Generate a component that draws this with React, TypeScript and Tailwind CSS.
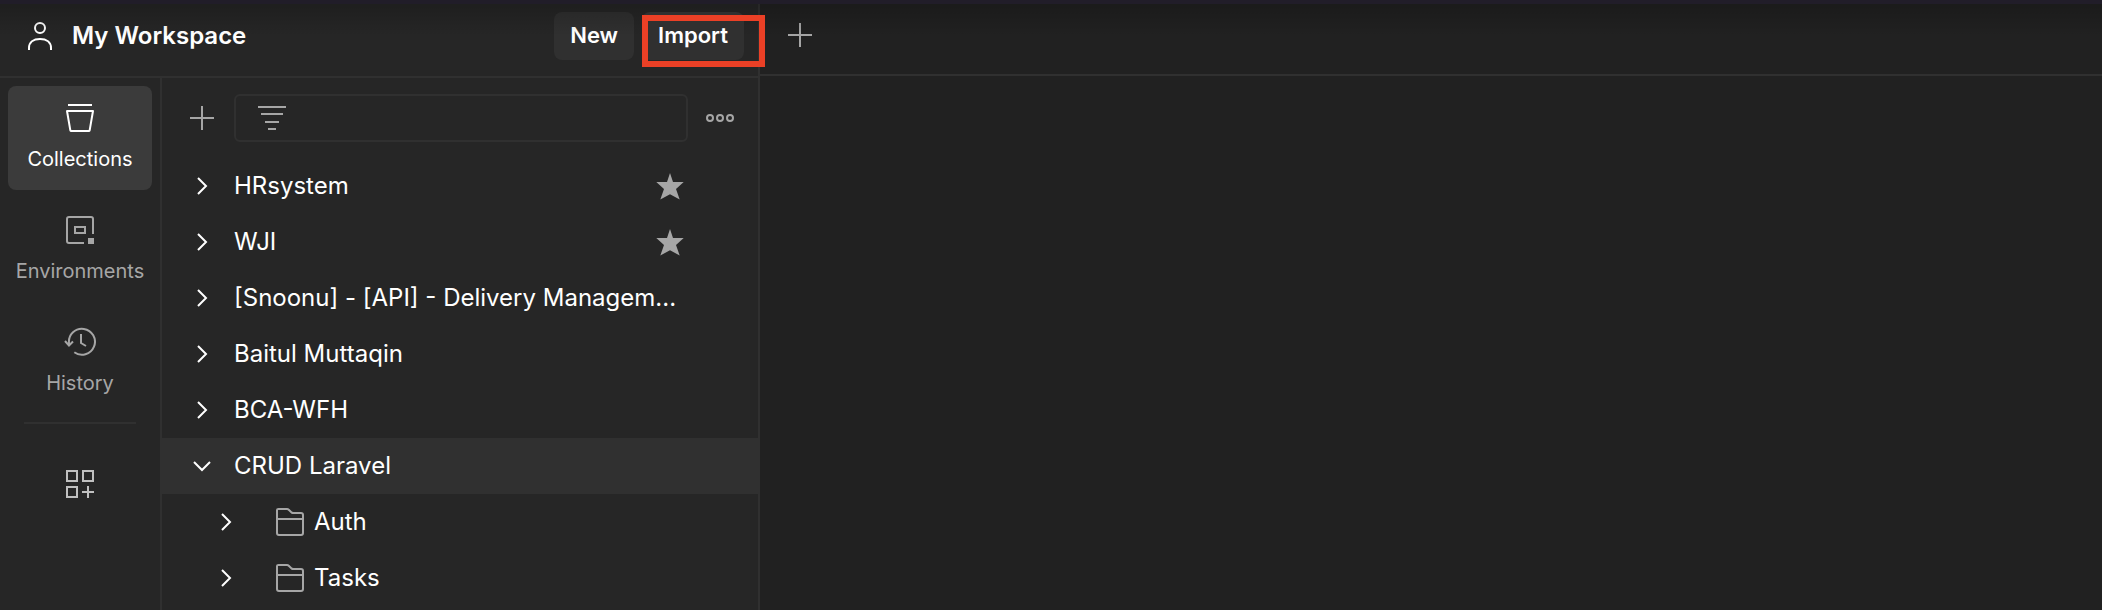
import { useState } from "react";
import type { ReactNode } from "react";

type Collection = {
  name: string;
  starred?: boolean;
  open?: boolean;
  folders?: string[];
};

const collections: Collection[] = [
  { name: "HRsystem", starred: true },
  { name: "WJI", starred: true },
  { name: "[Snoonu] - [API] - Delivery Managem..." },
  { name: "Baitul Muttaqin" },
  { name: "BCA-WFH" },
  { name: "CRUD Laravel", open: true, folders: ["Auth", "Tasks"] },
];

function Icon({ children, className = "" }: { children: ReactNode; className?: string }) {
  return (
    <svg
      viewBox="0 0 32 32"
      className={`size-8 shrink-0 ${className}`}
      fill="none"
      stroke="currentColor"
      strokeWidth="2"
      aria-hidden="true"
    >
      {children}
    </svg>
  );
}

function UserIcon() {
  return (
    <Icon>
      <circle cx="16" cy="8" r="5" />
      <path d="M5 30V28C5 22 9.500 19 16 19S27 22 27 28V30" />
    </Icon>
  );
}

function PlusIcon() {
  return (
    <Icon className="text-[#a6a6a6]">
      <path d="M16 4V28M4 16H28" />
    </Icon>
  );
}

function FilterIcon() {
  return (
    <Icon className="text-[#a6a6a6]">
      <path d="M2 5H30M5 12H27M9 20H23M12 27H20" />
    </Icon>
  );
}

function MoreIcon() {
  return (
    <Icon className="text-[#a6a6a6]">
      <circle cx="6" cy="16" r="3" />
      <circle cx="16" cy="16" r="3" />
      <circle cx="26" cy="16" r="3" />
    </Icon>
  );
}

function CollectionsIcon() {
  return (
    <Icon>
      <path d="M4 3H28" />
      <path d="M3 9H29L25.700 28.200Q25.500 29 24.700 29H7.300Q6.500 29 6.300 28.200Z" strokeLinejoin="round" />
    </Icon>
  );
}

function EnvironmentsIcon() {
  return (
    <Icon>
      <path d="M20 29H5Q3 29 3 27V5Q3 3 5 3H27Q29 3 29 5V20" />
      <rect x="11" y="13" width="10" height="6" />
      <rect x="24" y="24" width="6" height="6" fill="currentColor" stroke="none" />
    </Icon>
  );
}

function HistoryIcon() {
  return (
    <Icon>
      <path d="M10.300 26.300A13 13 0 1 0 5 17V19" />
      <path d="M1 15L5 19.500L9 15.500" />
      <path d="M17 8V17L22 20" />
    </Icon>
  );
}

function ConfigureIcon() {
  return (
    <Icon>
      <rect x="3" y="3" width="10" height="10" />
      <rect x="19" y="3" width="10" height="10" />
      <rect x="3" y="19" width="10" height="10" />
      <path d="M24 18V30M18 24H30" />
    </Icon>
  );
}

function Chevron({ open = false }: { open?: boolean }) {
  return (
    <Icon>
      <path d={open ? "M8 12L16 20L24 12" : "M12 8L20 16L12 24"} />
    </Icon>
  );
}

function StarIcon() {
  return (
    <Icon className="text-[#a6a6a6]">
      <path
        d="M16 3L19 12H29.700L22 19L25.700 29.500L16 24.300L6.300 29.500L10 19L2.300 12H13Z"
        fill="currentColor"
        stroke="none"
      />
    </Icon>
  );
}

function FolderIcon() {
  return (
    <Icon className="text-[#a6a6a6]">
      <path d="M3 4Q3 3 4.500 3H13Q14 3 15 4L17.500 6.500Q18.500 7 19.500 7H27Q29 7 29 9V27Q29 29 27 29H5Q3 29 3 27Z" />
      <path d="M3 13H29" />
    </Icon>
  );
}

function NavButton({
  label,
  icon,
  active,
  onClick,
}: {
  label: string;
  icon: ReactNode;
  active: boolean;
  onClick: () => void;
}) {
  return (
    <button
      type="button"
      onClick={onClick}
      aria-pressed={active}
      className={`flex h-26 w-full flex-col items-center gap-[11px] rounded-lg pt-4 text-xl leading-7 ${
        active ? "bg-[#3b3b3b] text-white" : "text-[#a6a6a6]"
      }`}
    >
      {icon}
      {label}
    </button>
  );
}

function CollectionItem({ item }: { item: Collection }) {
  const [open, setOpen] = useState(Boolean(item.open));
  return (
    <li>
      <button
        type="button"
        aria-expanded={open}
        onClick={() => setOpen(!open)}
        className={`flex h-14 w-full items-center gap-4 pr-18 pl-6 text-left ${open ? "bg-[#303030]" : ""}`}
      >
        <Chevron open={open} />
        <span className="flex-1 whitespace-nowrap">{item.name}</span>
        {item.starred && <StarIcon />}
      </button>
      {open && (
        <ul>
          {item.folders?.map((folder) => (
            <li key={folder}>
              <button type="button" className="flex h-14 w-full items-center pl-12 text-left">
                <Chevron />
                <span className="ml-8 flex items-center gap-2">
                  <FolderIcon />
                  {folder}
                </span>
              </button>
            </li>
          ))}
        </ul>
      )}
    </li>
  );
}

export default function App() {
  const [section, setSection] = useState("Collections");
  const sections = [
    { label: "Collections", icon: <CollectionsIcon /> },
    { label: "Environments", icon: <EnvironmentsIcon /> },
    { label: "History", icon: <HistoryIcon /> },
  ];

  return (
    <div className="relative flex min-h-screen flex-col border-t-4 border-[#211d29] bg-[#212121] font-['Inter',sans-serif] text-2xl text-white">
      <div className="pointer-events-none absolute inset-x-0 top-0 h-8 bg-linear-to-b from-black/20 to-transparent" />
      <div className="flex flex-1">
        <aside className="flex w-190 shrink-0 flex-col border-r-2 border-[#303030] bg-[#262626]">
          <header className="flex h-[74px] items-start border-b-2 border-[#303030] pt-2 pr-3.5 pl-6">
            <div className="flex h-12 flex-1 items-center gap-4 font-semibold">
              <UserIcon />
              <h1>My Workspace</h1>
            </div>
            <div className="flex gap-2 text-[22px] font-semibold">
              <button type="button" className="h-12 rounded-lg bg-[#303030] px-4">
                New
              </button>
              <div className="relative">
                <button type="button" className="h-12 rounded-lg bg-[#303030] px-4">
                  Import
                </button>
                <div className="pointer-events-none absolute top-[3px] -right-[21px] -bottom-[7px] left-0 border-6 border-[#eb4026]" />
              </div>
            </div>
          </header>

          <div className="flex flex-1">
            <nav className="flex w-[162px] shrink-0 flex-col border-r-2 border-[#303030] px-2 pt-2">
              <div className="flex flex-col gap-2">
                {sections.map(({ label, icon }) => (
                  <NavButton
                    key={label}
                    label={label}
                    icon={icon}
                    active={label === section}
                    onClick={() => setSection(label)}
                  />
                ))}
              </div>
              <hr className="mx-4 my-2 border-t-2 border-[#303030]" />
              <button
                type="button"
                aria-label="Configure sidebar"
                className="flex h-26 w-full items-center justify-center text-[#c0c0c0]"
              >
                <ConfigureIcon />
              </button>
            </nav>

            <section className="flex-1">
              <div className="flex items-center py-4 pr-5.5 pl-6">
                <button type="button" aria-label="Create collection">
                  <PlusIcon />
                </button>
                <label className="mr-4 ml-4 flex h-12 flex-1 items-center rounded-md border-2 border-[#303030] pl-5">
                  <FilterIcon />
                  <input
                    type="search"
                    aria-label="Filter collections"
                    className="ml-4 w-full min-w-0 bg-transparent outline-none"
                  />
                </label>
                <button type="button" aria-label="More actions">
                  <MoreIcon />
                </button>
              </div>
              <ul>
                {collections.map((item) => (
                  <CollectionItem key={item.name} item={item} />
                ))}
              </ul>
            </section>
          </div>
        </aside>

        <main className="min-w-0 flex-1">
          <div className="flex h-18 items-center border-b-2 border-[#303030] px-6 pb-2">
            <button type="button" aria-label="Open new tab">
              <PlusIcon />
            </button>
          </div>
        </main>
      </div>
    </div>
  );
}
